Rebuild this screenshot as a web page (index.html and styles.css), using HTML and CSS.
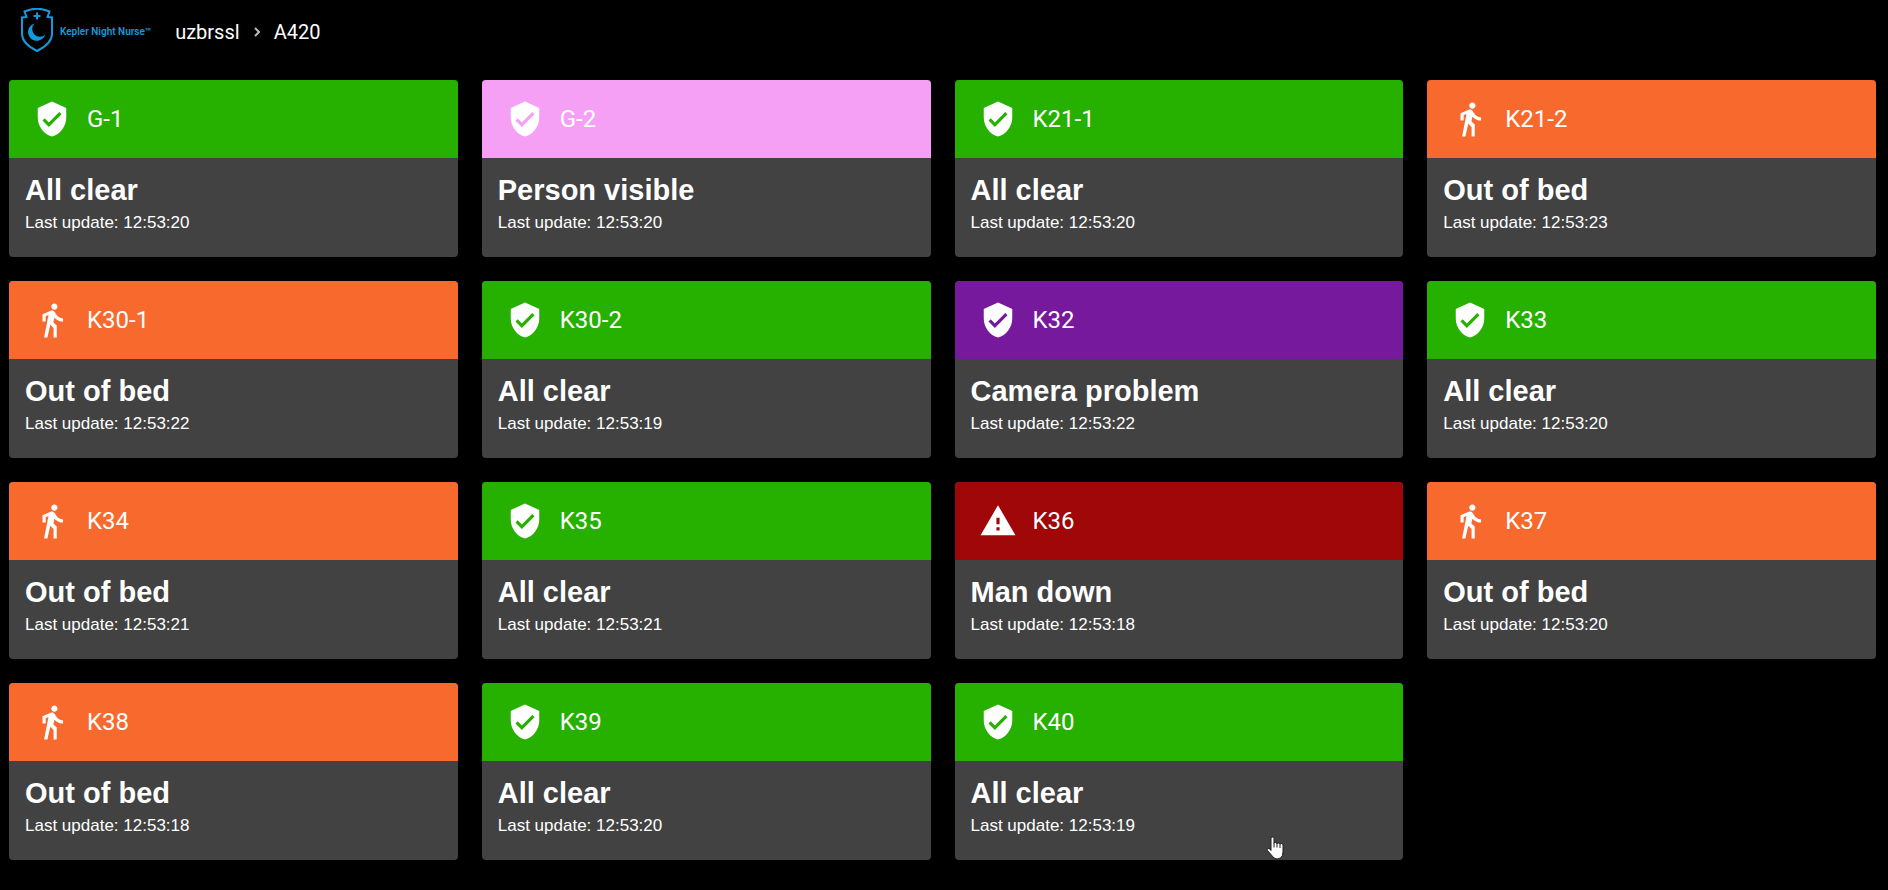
FILE: index.html
```html
<!DOCTYPE html>
<html lang="en">
<head>
<meta charset="utf-8">
<meta name="viewport" content="width=device-width, initial-scale=1">
<title>Kepler Night Nurse – A420</title>
<link rel="stylesheet" href="styles.css">
</head>
<body>
<svg class="sprite" aria-hidden="true">
  <symbol id="shield" viewBox="0 0 24 24"><path d="M12 1L3 5v6c0 5.55 3.84 10.74 9 12 5.160-1.260 9-6.450 9-12V5l-9-4zm-2 16l-4-4 1.410-1.410L10 14.170l6.590-6.590L18 9l-8 8z"/></symbol>
  <symbol id="walk" viewBox="0 0 24 24"><path d="M13.500 5.500c1.100 0 2-.9 2-2s-.9-2-2-2-2 .9-2 2 .9 2 2 2zM9.800 8.900L7 23h2.100l1.800-8 2.100 2v6h2v-7.500l-2.100-2 .6-3C14.800 12 16.800 13 19 13v-2c-1.900 0-3.500-1-4.300-2.400l-1-1.600c-.4-.6-1-1-1.700-1-.3 0-.5.100-.8.100L6 8.300V13h2V9.600l1.800-.7"/></symbol>
  <symbol id="warning" viewBox="0 0 24 24"><path d="M1 21h22L12 2 1 21zm12-3h-2v-2h2v2zm0-4h-2v-4h2v4z"/></symbol>
</svg>

<header class="topbar">
  <a class="brand" href="#">
    <svg class="brand-mark" viewBox="0 0 32 44" aria-hidden="true">
      <path class="brand-line" d="M3.500 3.500Q16-2 28.500 3.500L26.500 9L31 9.500V26C31 34 24 39 16 43C8 39 1 34 1 26V9.500L5.500 9Z"/>
      <path class="brand-fill" d="M15 4.500h2v2.500h2.500v2H17v2.500h-2V9h-2.500V7H15z"/>
      <path class="brand-fill" d="M13.500 15.500A8.800 8.800 0 1 0 24.300 26.500A7.400 7.400 0 0 1 13.500 15.500Z"/>
    </svg>
    <span class="brand-name">Kepler Night Nurse™</span>
  </a>
  <nav class="crumbs" aria-label="Breadcrumb">
    <a href="#">uzbrssl</a>
    <svg class="chevron" viewBox="0 0 6 10" aria-hidden="true"><path d="M1 1l4 4-4 4"/></svg>
    <a href="#" aria-current="page">A420</a>
  </nav>
</header>

<main class="rooms">
  <a class="card" href="#"><div class="card-head clear"><svg class="icon" aria-hidden="true"><use href="#shield"/></svg><span>G-1</span></div><div class="card-body"><h2>All clear</h2><p>Last update: 12:53:20</p></div></a>
  <a class="card" href="#"><div class="card-head visible"><svg class="icon" aria-hidden="true"><use href="#shield"/></svg><span>G-2</span></div><div class="card-body"><h2>Person visible</h2><p>Last update: 12:53:20</p></div></a>
  <a class="card" href="#"><div class="card-head clear"><svg class="icon" aria-hidden="true"><use href="#shield"/></svg><span>K21-1</span></div><div class="card-body"><h2>All clear</h2><p>Last update: 12:53:20</p></div></a>
  <a class="card" href="#"><div class="card-head out"><svg class="icon" aria-hidden="true"><use href="#walk"/></svg><span>K21-2</span></div><div class="card-body"><h2>Out of bed</h2><p>Last update: 12:53:23</p></div></a>
  <a class="card" href="#"><div class="card-head out"><svg class="icon" aria-hidden="true"><use href="#walk"/></svg><span>K30-1</span></div><div class="card-body"><h2>Out of bed</h2><p>Last update: 12:53:22</p></div></a>
  <a class="card" href="#"><div class="card-head clear"><svg class="icon" aria-hidden="true"><use href="#shield"/></svg><span>K30-2</span></div><div class="card-body"><h2>All clear</h2><p>Last update: 12:53:19</p></div></a>
  <a class="card" href="#"><div class="card-head camera"><svg class="icon" aria-hidden="true"><use href="#shield"/></svg><span>K32</span></div><div class="card-body"><h2>Camera problem</h2><p>Last update: 12:53:22</p></div></a>
  <a class="card" href="#"><div class="card-head clear"><svg class="icon" aria-hidden="true"><use href="#shield"/></svg><span>K33</span></div><div class="card-body"><h2>All clear</h2><p>Last update: 12:53:20</p></div></a>
  <a class="card" href="#"><div class="card-head out"><svg class="icon" aria-hidden="true"><use href="#walk"/></svg><span>K34</span></div><div class="card-body"><h2>Out of bed</h2><p>Last update: 12:53:21</p></div></a>
  <a class="card" href="#"><div class="card-head clear"><svg class="icon" aria-hidden="true"><use href="#shield"/></svg><span>K35</span></div><div class="card-body"><h2>All clear</h2><p>Last update: 12:53:21</p></div></a>
  <a class="card" href="#"><div class="card-head down"><svg class="icon" aria-hidden="true"><use href="#warning"/></svg><span>K36</span></div><div class="card-body"><h2>Man down</h2><p>Last update: 12:53:18</p></div></a>
  <a class="card" href="#"><div class="card-head out"><svg class="icon" aria-hidden="true"><use href="#walk"/></svg><span>K37</span></div><div class="card-body"><h2>Out of bed</h2><p>Last update: 12:53:20</p></div></a>
  <a class="card" href="#"><div class="card-head out"><svg class="icon" aria-hidden="true"><use href="#walk"/></svg><span>K38</span></div><div class="card-body"><h2>Out of bed</h2><p>Last update: 12:53:18</p></div></a>
  <a class="card" href="#"><div class="card-head clear"><svg class="icon" aria-hidden="true"><use href="#shield"/></svg><span>K39</span></div><div class="card-body"><h2>All clear</h2><p>Last update: 12:53:20</p></div></a>
  <a class="card" href="#"><div class="card-head clear"><svg class="icon" aria-hidden="true"><use href="#shield"/></svg><span>K40</span></div><div class="card-body"><h2>All clear</h2><p>Last update: 12:53:19</p></div>
    <svg class="pointer" viewBox="0 0 18 24" aria-hidden="true"><path d="M5 2.500Q5 1 6.500 1T8 2.500V7.500Q8 6.500 9.500 6.500T11 8Q11 7 12.500 7T14 8.500Q14 7.500 15.500 7.500T17 9V16Q17 20 14.500 22Q11 24 8 22L1.500 14.500Q.5 13 2 12.500T5 14.500Z"/><path d="M8 7.500V11.500M11 8V11.500M14 8.500V12"/></svg>
  </a>
</main>
</body>
</html>
```
FILE: styles.css
```css
* {
  box-sizing: border-box;
}

body {
  margin: 0;
  background: #000;
  color: #fff;
  font-family: Roboto, "Liberation Sans", sans-serif;
}

a {
  color: inherit;
  text-decoration: none;
}

.sprite {
  display: none;
}

.topbar {
  display: flex;
  align-items: center;
  gap: 24px;
  height: 60px;
  padding: 0 21px;
}

.brand {
  display: flex;
  align-items: center;
  gap: 7px;
  color: #129bdb;
}

.brand-mark {
  width: 32px;
  height: 44px;
}

.brand-line {
  fill: none;
  stroke: currentColor;
  stroke-width: 2;
}

.brand-fill {
  fill: currentColor;
}

.brand-name {
  padding-top: 2px;
  font-size: 10px;
  font-weight: 600;
}

.crumbs {
  display: flex;
  align-items: center;
  gap: 14px;
  padding-top: 4px;
  font-size: 20px;
}

.chevron {
  width: 6px;
  height: 10px;
  fill: none;
  stroke: #bbb;
  stroke-width: 2;
}

.rooms {
  display: grid;
  grid-template-columns: repeat(4, minmax(0, 1fr));
  gap: 24px;
  padding: 20px 12px 30px 9px;
}

.card {
  position: relative;
  overflow: hidden;
  border-radius: 4px;
  background: #424242;
}

.card-head {
  display: flex;
  align-items: center;
  gap: 16px;
  height: 78px;
  padding: 0 24px;
  font-size: 24px;
}

.icon {
  width: 38px;
  height: 38px;
  fill: #fff;
}

.clear {
  background: #26b000;
}

.visible {
  background: #f5a0f5;
}

.out {
  background: #f7692d;
}

.camera {
  background: #77199c;
}

.down {
  background: #a00709;
}

.card-body {
  padding: 16px 16px 22px;
  font-family: "Liberation Sans", Arial, sans-serif;
}

.card-body h2 {
  margin: 0;
  font-size: 29px;
  line-height: 32px;
}

.card-body p {
  margin: 5px 0 0;
  font-size: 17px;
  line-height: 24px;
}

.pointer {
  position: absolute;
  right: 119px;
  bottom: 0;
  width: 18px;
  height: 24px;
  fill: #fff;
  stroke: #1c1c28;
  stroke-width: 1;
}
```
